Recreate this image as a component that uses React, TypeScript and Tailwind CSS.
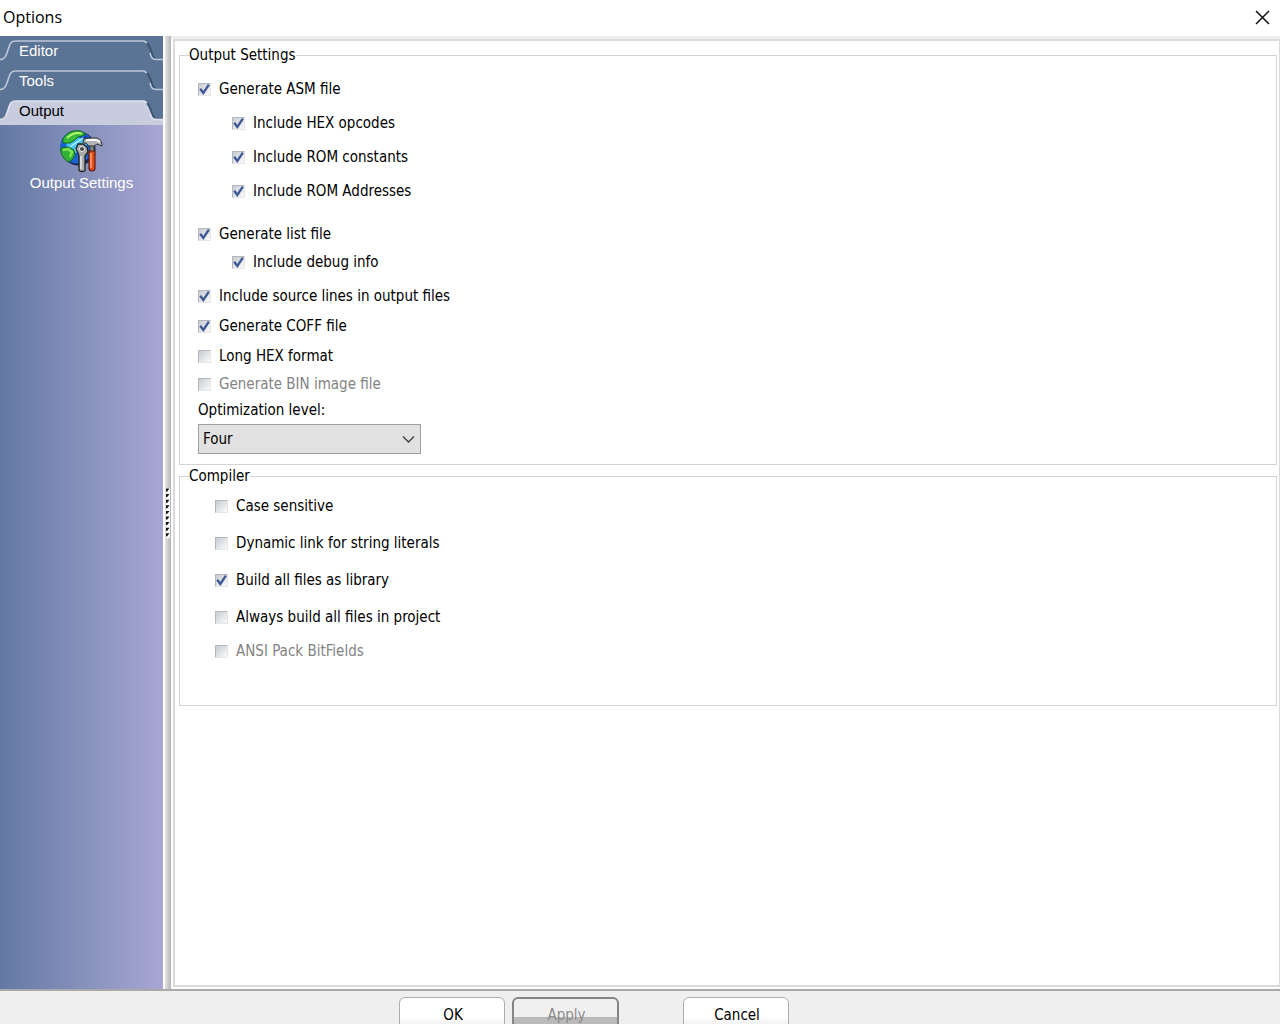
import { useState } from "react";

type CheckProps = {
  id: string;
  label: string;
  checked?: boolean;
  disabled?: boolean;
  className?: string;
};

const Check = ({ id, label, checked = false, disabled = false, className = "" }: CheckProps) => {
  const [on, setOn] = useState(checked);

  return (
    <div className={`flex h-5 items-center gap-2 ${className}`}>
      <span className="relative size-[13px] shrink-0">
        <input
          id={id}
          type="checkbox"
          checked={on}
          disabled={disabled}
          onChange={(event) => setOn(event.target.checked)}
          className="block size-[13px] appearance-none border border-t-[#b4b8bc] border-r-[#e6e6e6] border-b-[#e6e6e6] border-l-[#b4b8bc] bg-linear-to-br from-[#c6ccd3] to-[#fbfbfb]"
        />
        {on && (
          <svg
            className="pointer-events-none absolute inset-0"
            width="13"
            height="13"
            viewBox="0 0 13 13"
            fill="none"
          >
            <path d="M2.2 5.8 L5.3 10 L10.9 1.6" stroke="#3f5797" strokeWidth="2.3" />
          </svg>
        )}
      </span>
      <label htmlFor={id} className={disabled ? "text-[#838383]" : ""}>
        {label}
      </label>
    </div>
  );
};

const SideTab = ({ label, active = false }: { label: string; active?: boolean }) => (
  <button
    type="button"
    className={`relative block w-full overflow-hidden pl-[19px] text-left leading-[30px] ${
      active ? "h-[29px] text-black" : "h-[30px] text-white"
    }`}
  >
    <svg
      className="absolute inset-0"
      width="163"
      height="30"
      viewBox="0 0 163 30"
      fill="none"
    >
      {active && (
        <path
          d="M0 24 C5 24 6 20 8 14 C10 8 10 5 16 5 H143 C148 5 149 9 151 15 C153 21 154 24 158 24 H163 V30 H0 Z"
          fill="#c7ccde"
        />
      )}
      <path
        d="M0 23.5 C5 23.5 6 20 8 14 C10 8 10 5 16 5 H144 L147 7"
        stroke={active ? "#dfe3ee" : "#bcc7d8"}
        strokeWidth="1.6"
      />
      <path
        d="M147 7 C150 10 150 12 151.5 16 C152 19 153 21 155 22.5"
        stroke="#3b5472"
        strokeWidth="2"
      />
      <path
        d="M150 17 C151 21 152 23.5 156 23.5 H163"
        stroke={active ? "#dfe3ee" : "#bcc7d8"}
        strokeWidth="1.6"
      />
    </svg>
    <span className="relative">{label}</span>
  </button>
);

const GlobeToolsIcon = () => (
  <svg width="44" height="44" viewBox="1 0 44 44" fill="none">
    <circle cx="19.5" cy="19.5" r="17" fill="#17264d" />
    <circle cx="17.5" cy="18" r="16.5" fill="#1c63d6" />
    <path d="M7 12 L19 8 L29 13 L25 21 L13 25 L8 20 Z" fill="#45c4f3" />
    <path d="M11 18 L24 9 M15 22 L27 12" stroke="#b5efff" strokeWidth="1.5" />
    <path
      d="M4 10 C8 3 15 1 21 2 L27 5 L23 7 L19 8 L16 11 L11 14 L4 14 Z"
      fill="#36ba37"
      stroke="#14641d"
    />
    <path d="M8 9 C13 4 17 3 23 4.5" stroke="#b1f36e" strokeWidth="2" />
    <path
      d="M2 19 L9 18 L15 21 L16 26 L13 31 L9 33 C4 29 1 24 2 19 Z"
      fill="#31b338"
      stroke="#14641d"
    />
    <path d="M4 21 L9 20 L13 23 L11 28" stroke="#80e252" strokeWidth="2.5" />
    <path d="M26 6 C30 9 32 13 32 17 L28 15 L25 10 Z" fill="#123aa4" />
    {/* wrench */}
    <path
      d="M19 15 L17 20 L19 24 L20 27 V41 C20 43 26 43 26 41 V27 L29 23 L28 18 L24 15 Z"
      fill="#aaa"
      stroke="#222"
      strokeWidth="1.3"
    />
    <path d="M22 27 V40" stroke="#eee" strokeWidth="1.4" />
    <circle cx="23" cy="20" r="2.5" fill="#444" stroke="#eee" />
    {/* hammer */}
    <path d="M31 16 H35 V25 H31 Z" fill="#888" stroke="#333" />
    <path
      d="M25 10 L31 9 H37 C41 9 43 13 43 17 L38 15 L35 17 H30 L27 14 L24 14 Z"
      fill="#b4b4b4"
      stroke="#333"
    />
    <path d="M27 11 H37 L41 13" stroke="#fff" strokeWidth="1.8" />
    <path
      d="M30 22 H36 V39 C36 43 30 43 30 39 Z"
      fill="#df4a16"
      stroke="#621b13"
      strokeWidth="1.2"
    />
    <path d="M32 24 V39" stroke="#ffa37a" strokeWidth="1.5" />
  </svg>
);

const App = () => {
  const [level, setLevel] = useState("Four");

  return (
    <div className="flex h-screen flex-col overflow-hidden bg-white font-['DejaVu_Sans_Condensed','DejaVu_Sans',sans-serif] text-[15px] leading-5 text-black">
      {/* ==== Title bar ==== */}
      <header className="flex h-9 shrink-0 items-center justify-between pr-2.5 pb-0.5 pl-[3px]">
        <h1 className="font-['Open_Sans',sans-serif] text-base leading-5">Options</h1>
        <button type="button" aria-label="Close">
          <svg width="15" height="15" viewBox="0 0 15 15" fill="none">
            <path d="M1 1 L14 14 M14 1 L1 14" stroke="#111" strokeWidth="1.5" />
          </svg>
        </button>
      </header>

      <div className="flex min-h-0 flex-1">
        {/* ==== Sidebar ==== */}
        <nav className="flex w-[163px] shrink-0 flex-col bg-linear-to-r from-[#6379a3] to-[#a8a7d3] font-['Liberation_Sans',sans-serif]">
          <div className="bg-[#5b7395]">
            <SideTab label="Editor" />
            <SideTab label="Tools" />
            <SideTab label="Output" active />
          </div>
          <a href="#output" className="flex flex-col items-center pt-1 text-white">
            <GlobeToolsIcon />
            <span>Output Settings</span>
          </a>
        </nav>

        {/* ==== Splitter ==== */}
        <div className="ml-0.5 flex w-1.5 shrink-0 items-center bg-linear-to-r from-[#e6e6e6] to-[#b4b4b4]">
          <svg width="6" height="50" viewBox="0 0 6 50">
            <path d="M1 0 H5 V50 H1 Z" fill="#fff" />
            {Array.from({ length: 9 }, (_, i) => (
              <path key={i} d="M0.5 0 H4 L1.5 3.2 L0.5 3 Z" fill="#111" transform={`translate(0.5 ${0.5 + i * 5.6})`} />
            ))}
          </svg>
        </div>

        {/* ==== Settings ==== */}
        <main className="flex min-w-0 flex-1 flex-col border-t-[3px] border-[#efefef] pb-0.5 pl-0.5">
          <form className="flex-1 border-2 border-r border-[#dadada] pt-1 pr-0.5 pl-1">
            <fieldset className="border border-[#d3d3d3] pt-3.5 pb-2.5 pl-[18px]">
              <legend className="-ml-[9px]">Output Settings</legend>
              <Check id="asm" label="Generate ASM file" checked />
              <div className="mt-3.5 flex flex-col gap-3.5 pl-[34px]">
                <Check id="hex" label="Include HEX opcodes" checked />
                <Check id="rom" label="Include ROM constants" checked />
                <Check id="addr" label="Include ROM Addresses" checked />
              </div>
              <Check id="list" label="Generate list file" checked className="mt-[23px]" />
              <Check id="debug" label="Include debug info" checked className="mt-2 ml-[34px]" />
              <Check
                id="source"
                label="Include source lines in output files"
                checked
                className="mt-3.5"
              />
              <Check id="coff" label="Generate COFF file" checked className="mt-2.5" />
              <Check id="long" label="Long HEX format" className="mt-2.5" />
              <Check id="bin" label="Generate BIN image file" disabled className="mt-2" />
              <label htmlFor="level" className="mt-1.5 block">
                Optimization level:
              </label>
              <div className="relative mt-1 w-[223px]">
                <select
                  id="level"
                  value={level}
                  onChange={(event) => setLevel(event.target.value)}
                  className="block h-[30px] w-full appearance-none border border-[#a0a0a0] bg-[#e1e1e1] pl-1"
                >
                  <option>One</option>
                  <option>Two</option>
                  <option>Three</option>
                  <option>Four</option>
                  <option>Five</option>
                </select>
                <svg
                  className="pointer-events-none absolute top-[11px] right-1.5"
                  width="13"
                  height="9"
                  viewBox="0 0 13 9"
                  fill="none"
                >
                  <path d="M1 1.5 L6.5 7 L12 1.5" stroke="#444" strokeWidth="1.5" />
                </svg>
              </div>
            </fieldset>

            <fieldset className="mt-px border border-[#d3d3d3] pt-2.5 pb-11 pl-[35px]">
              <legend className="-ml-[26px]">Compiler</legend>
              <div className="flex flex-col gap-[17px]">
                <Check id="case" label="Case sensitive" />
                <Check id="dynamic" label="Dynamic link for string literals" />
                <Check id="library" label="Build all files as library" checked />
                <Check id="always" label="Always build all files in project" />
              </div>
              <Check id="ansi" label="ANSI Pack BitFields" disabled className="mt-3.5" />
            </fieldset>
          </form>
        </main>
      </div>

      {/* ==== Buttons ==== */}
      <footer className="flex h-[35px] shrink-0 items-start border-t-2 border-[#a8a8a8] bg-[#efefef] pt-1.5 pl-[399px]">
        <button
          type="button"
          className="h-9 w-[106px] shrink-0 rounded-md border border-[#adadad] bg-linear-to-b from-white from-55% to-[#e4e4e4] pl-0.5"
        >
          OK
        </button>
        <button
          type="button"
          disabled
          className="ml-[7px] h-9 w-[107px] shrink-0 rounded-md border-2 border-[#858585] bg-linear-to-b from-[#f0f0f0] from-55% to-[#bababa] to-55% pl-0.5 text-[#8c8c8c]"
        >
          Apply
        </button>
        <button
          type="button"
          className="ml-16 h-9 w-[106px] shrink-0 rounded-md border border-[#adadad] bg-linear-to-b from-white from-55% to-[#e4e4e4] pl-0.5"
        >
          Cancel
        </button>
      </footer>
    </div>
  );
};

export default App;
